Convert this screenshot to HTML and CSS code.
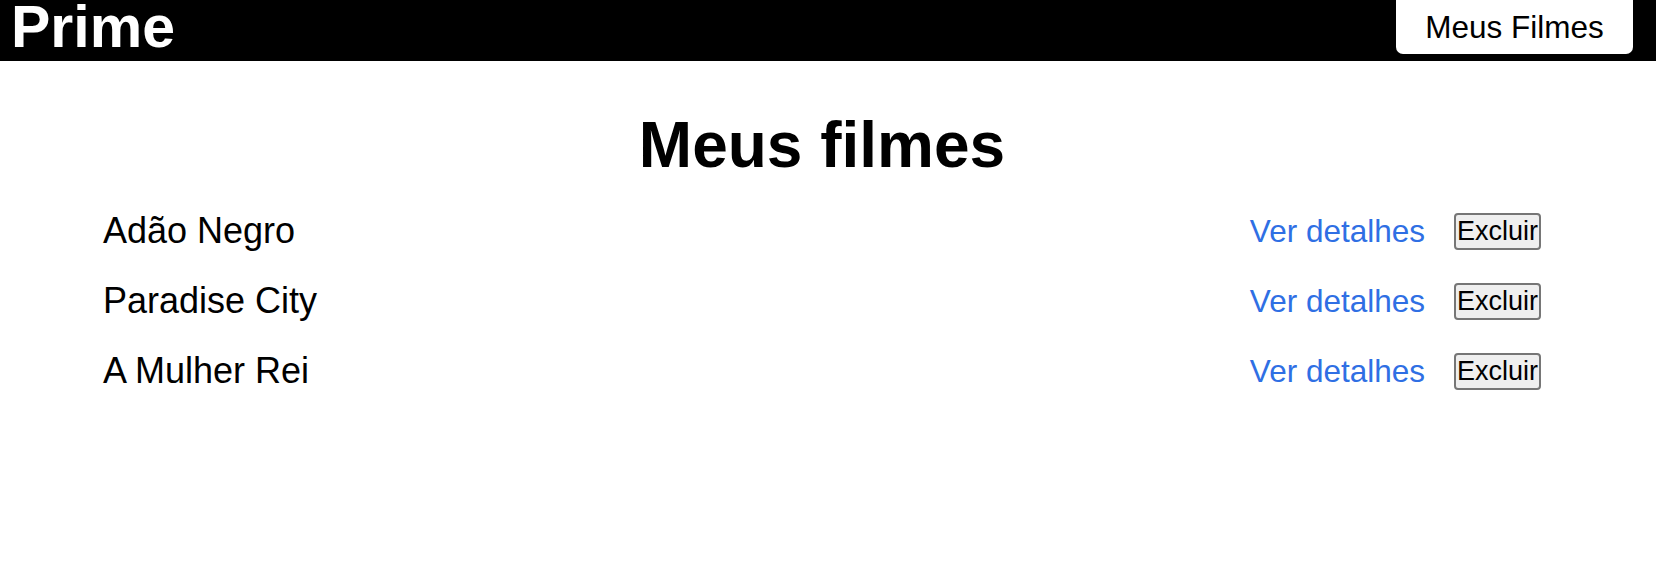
FILE: index.html
```html
<!DOCTYPE html>
<html lang="pt-BR">
<head>
<meta charset="utf-8">
<title>Prime</title>
<link rel="stylesheet" href="styles.css">
</head>
<body>
<header class="header">
  <a class="logo" href="#">Prime</a>
  <a class="favoritos" href="#">Meus Filmes</a>
</header>
<main class="meus-filmes">
  <h1 class="titulo">Meus filmes</h1>
  <ul class="lista">
    <li class="item">
      <span class="nome">Adão Negro</span>
      <div class="acoes">
        <a class="detalhes" href="#">Ver detalhes</a>
        <button class="excluir">Excluir</button>
      </div>
    </li>
    <li class="item">
      <span class="nome">Paradise City</span>
      <div class="acoes">
        <a class="detalhes" href="#">Ver detalhes</a>
        <button class="excluir">Excluir</button>
      </div>
    </li>
    <li class="item">
      <span class="nome">A Mulher Rei</span>
      <div class="acoes">
        <a class="detalhes" href="#">Ver detalhes</a>
        <button class="excluir">Excluir</button>
      </div>
    </li>
  </ul>
</main>
</body>
</html>
```

FILE: styles.css
```css
* {
  box-sizing: border-box;
  margin: 0;
  padding: 0;
}

body {
  font-family: "Liberation Sans", Arial, sans-serif;
  background: #ffffff;
  color: #000000;
}

.header {
  height: 61px;
  background: #000000;
  display: flex;
  justify-content: space-between;
  align-items: flex-start;
  padding: 0 23px 0 11px;
}

.logo {
  color: #ffffff;
  text-decoration: none;
  font-weight: bold;
  font-size: 59px;
  line-height: 52px;
  padding-top: 1px;
}

.favoritos {
  display: block;
  width: 237px;
  height: 54px;
  background: #ffffff;
  color: #000000;
  text-decoration: none;
  font-size: 31.5px;
  line-height: 54px;
  text-align: center;
  border-radius: 0 0 7px 7px;
}

.meus-filmes {
  margin: 0 115px 0 103px;
  padding-top: 48px;
}

.titulo {
  text-align: center;
  font-size: 64px;
  line-height: 72px;
  font-weight: bold;
  margin-bottom: 15px;
}

.lista {
  list-style: none;
}

.item {
  height: 70px;
  display: flex;
  align-items: center;
  justify-content: space-between;
}

.nome {
  font-size: 36px;
}

.acoes {
  display: flex;
  align-items: center;
  gap: 29px;
}

.detalhes {
  color: #2f6fe4;
  text-decoration: none;
  font-size: 31.5px;
}

.excluir {
  font-family: "Liberation Sans", Arial, sans-serif;
  font-size: 27px;
  width: 87px;
  height: 37px;
  padding: 0;
  background: #efefef;
  color: #000000;
  border: 2px solid #767676;
  border-radius: 4px;
}
```
